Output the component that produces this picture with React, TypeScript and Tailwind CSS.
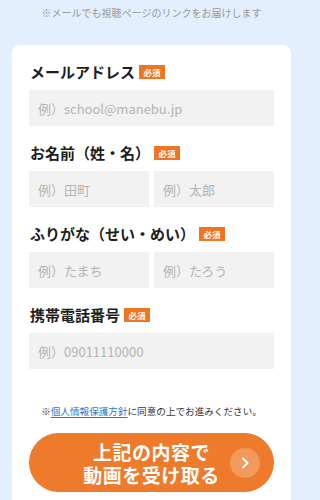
import React from 'react';

const font = { fontFamily: '"Noto Sans CJK JP", "Noto Sans", sans-serif' };

function Badge() {
  return (
    <span className="ml-[4px] inline-flex h-[14px] w-[26px] items-center justify-center bg-[#ee7623] text-[8.5px] font-bold leading-none text-white">
      必須
    </span>
  );
}

function Label({ text }: { text: string }) {
  return (
    <div className="mb-[8px] flex h-[20px] items-center pl-[1px]">
      <span className="text-[15px] font-bold leading-[20px] text-[#1e1e1e]">{text}</span>
      <Badge />
    </div>
  );
}

function Field({ placeholder }: { placeholder: string }) {
  return (
    <input
      type="text"
      size={1}
      placeholder={placeholder}
      className="h-[36px] w-full min-w-0 bg-[#f2f2f2] px-[9px] text-[13px] text-[#333] outline-none placeholder:text-[#b4b4b4]"
      style={font}
    />
  );
}

export default function App() {
  return (
    <div className="min-h-[500px] bg-[#e3effc]" style={font}>
      <div className="w-[303px] overflow-hidden">
        <p className="pt-[6px] text-center text-[10px] leading-[14px] text-[#999]">
          ※メールでも視聴ページのリンクをお届けします
        </p>

        <div className="mx-[12px] mt-[25px] rounded-[8px] bg-white px-[17px] pb-[20px] pt-[17px]">
          <Label text="メールアドレス" />
          <Field placeholder="例）school@manebu.jp" />

          <div className="mt-[17px]">
            <Label text="お名前（姓・名）" />
            <div className="flex gap-[5px]">
              <Field placeholder="例）田町" />
              <Field placeholder="例）太郎" />
            </div>
          </div>

          <div className="mt-[17px]">
            <Label text="ふりがな（せい・めい）" />
            <div className="flex gap-[5px]">
              <Field placeholder="例）たまち" />
              <Field placeholder="例）たろう" />
            </div>
          </div>

          <div className="mt-[17px]">
            <Label text="携帯電話番号" />
            <Field placeholder="例）09011110000" />
          </div>

          <p className="mt-[34px] text-center text-[9.6px] leading-[16px] text-[#333]">
            ※<a className="text-[#2a78cc] underline underline-offset-2">個人情報保護方針</a>に同意の上でお進みください。
          </p>

          <button className="relative mt-[14px] flex h-[59px] w-full flex-col items-center justify-center rounded-full bg-[#ee7a2b] text-[19px] font-bold leading-[23px] tracking-[0.5px] text-white">
            <span>上記の内容で</span>
            <span>動画を受け取る</span>
            <span className="absolute right-[14px] top-1/2 flex h-[30px] w-[30px] -translate-y-1/2 items-center justify-center rounded-full bg-[#f29a5c]">
              <svg width="14" height="14" viewBox="0 0 14 14" fill="none">
                <path d="M5 2.5 L9.5 7 L5 11.5" stroke="white" strokeWidth="2" strokeLinecap="round" strokeLinejoin="round" />
              </svg>
            </span>
          </button>
        </div>
      </div>
    </div>
  );
}
